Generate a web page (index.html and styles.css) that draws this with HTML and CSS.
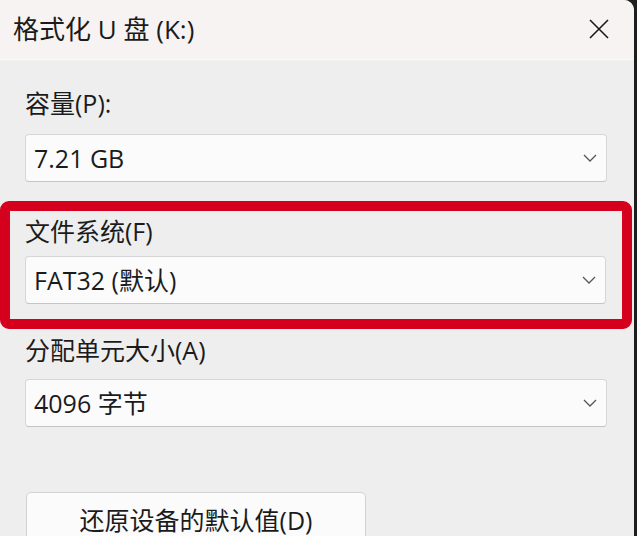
FILE: index.html
```html
<!DOCTYPE html>
<html lang="zh-CN">
<head>
<meta charset="utf-8">
<title>格式化 U 盘 (K:)</title>
<link rel="stylesheet" href="styles.css">
</head>
<body>
<div class="window">
  <header class="titlebar">
    <span class="title">格式化 U 盘 (K:)</span>
    <span class="close" aria-label="关闭">
      <svg width="20" height="20" viewBox="0 0 20 20"><path d="M1 1 L19 19 M19 1 L1 19" stroke="#1a1a1a" stroke-width="1.6" fill="none"/></svg>
    </span>
  </header>
  <main class="content">
    <div class="field field-capacity">
      <div class="label">容量(P):</div>
      <div class="select"><span class="value">7.21 GB</span><svg class="chev" width="14" height="8" viewBox="0 0 14 8"><polyline points="1,1 7,7 13,1" fill="none" stroke="#555" stroke-width="1.3"/></svg></div>
    </div>
    <div class="field highlight">
      <div class="label">文件系统(F)</div>
      <div class="select"><span class="value">FAT32 (默认)</span><svg class="chev" width="14" height="8" viewBox="0 0 14 8"><polyline points="1,1 7,7 13,1" fill="none" stroke="#555" stroke-width="1.3"/></svg></div>
    </div>
    <div class="field field-alloc">
      <div class="label">分配单元大小(A)</div>
      <div class="select"><span class="value">4096 字节</span><svg class="chev" width="14" height="8" viewBox="0 0 14 8"><polyline points="1,1 7,7 13,1" fill="none" stroke="#555" stroke-width="1.3"/></svg></div>
    </div>
    <div class="actions">
      <div class="btn">还原设备的默认值(D)</div>
    </div>
  </main>
</div>
</body>
</html>
```
FILE: styles.css
```css
* { box-sizing: border-box; }
html, body {
  margin: 0;
  padding: 0;
  background: #1e1e1e;
  width: 637px;
  height: 536px;
  overflow: hidden;
}
body {
  font-family: "Open Sans", "Noto Sans CJK SC", sans-serif;
  color: #1b1b1b;
}
.window {
  width: 634px;
  height: 536px;
  background: #eeeeef;
  border-top-right-radius: 10px;
  overflow: hidden;
}
.titlebar {
  height: 60px;
  background: #f7f3f2;
  border-bottom: 1px solid #fbfafa;
  display: flex;
  align-items: center;
  justify-content: space-between;
  padding: 0 25px 0 13px;
}
.title {
  font-size: 26px;
  line-height: 30px;
  margin-top: -2px;
}
.close {
  display: flex;
  width: 20px;
  height: 20px;
  margin-top: -2px;
}
.content {
  padding-top: 28px;
}
.field {
  padding: 0 27px 0 25px;
}
.label {
  font-size: 25px;
  line-height: 30px;
  margin-bottom: 16px;
}
.select {
  height: 48px;
  background: #fbfbfb;
  border: 1px solid #d6d6d6;
  border-bottom-color: #c4c4c4;
  border-radius: 4px;
  display: flex;
  align-items: center;
  justify-content: space-between;
  padding: 0 9px 0 8px;
}
.value {
  font-size: 25px;
  line-height: 30px;
}
.chev { display: block; }
.highlight {
  margin: 19px 2px 0 0;
  border: 10px solid #d4001e;
  border-radius: 9px;
  padding: 5px 16px 15px 15px;
}
.highlight .label { margin-bottom: 10px; }
.field-alloc { margin-top: 6px; }
.field-alloc .label { margin-bottom: 14px; }
.actions {
  margin-top: 65px;
  padding-left: 26px;
}
.btn {
  width: 340px;
  height: 56px;
  background: #fbfbfb;
  border: 1px solid #d2d2d2;
  border-radius: 5px;
  display: flex;
  align-items: center;
  justify-content: center;
  font-size: 25px;
  line-height: 30px;
}
```
